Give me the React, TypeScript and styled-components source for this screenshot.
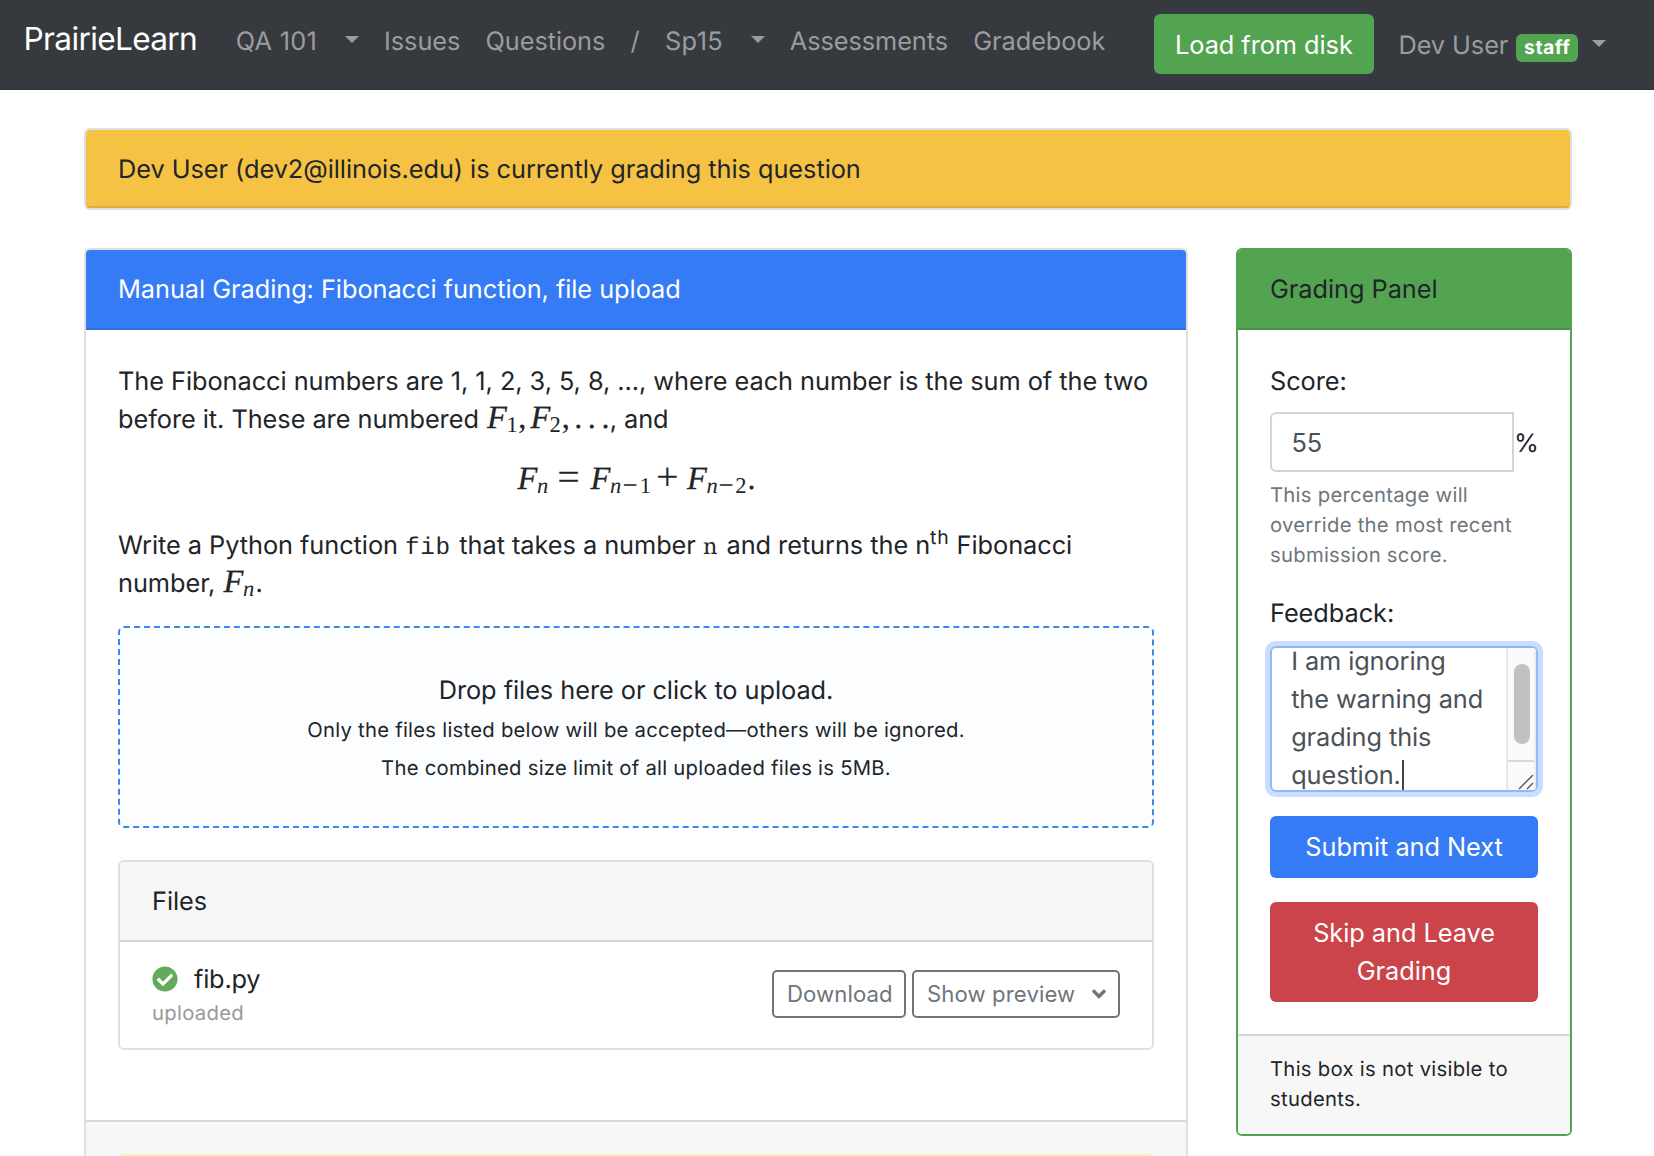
import React from 'react';
import styled, { createGlobalStyle, css } from 'styled-components';
import { FaAngleDown, FaCheckCircle } from 'react-icons/fa';

const color = {
  text: '#212529',
  muted: '#6e757c',
  primary: '#357bf6',
  success: '#53a451',
  danger: '#cb444a',
  warning: '#f5c243',
  dark: '#363a3f',
  border: '#dfdfdf',
  cap: '#f7f7f7',
};

const GlobalStyle = createGlobalStyle`
  *, *::before, *::after { box-sizing: border-box; }
  html, body { margin: 0; height: 1156px; overflow: hidden; }
  body {
    background: #fff;
    color: ${color.text};
    font-family: Inter, 'Liberation Sans', sans-serif;
    font-size: 25.33px;
    line-height: 38px;
    letter-spacing: -0.05px;
    text-rendering: geometricPrecision;
  }
  button, input { font: inherit; letter-spacing: inherit; margin: 0; }
`;

/* Navigation bar */
const Navbar = styled.nav`
  display: flex;
  align-items: center;
  height: 90px;
  padding-left: 23.5px;
  background: ${color.dark};
  border-bottom: 1px solid #2e3236;
`;

const NavLeft = styled.div`
  display: flex;
  align-items: baseline;
  gap: 25.3px;
  padding-bottom: 9px;
`;

const Brand = styled.a`
  width: 187px;
  color: #fff;
  font-size: 31.67px;
  letter-spacing: -0.67px;
  white-space: nowrap;
`;

const NavLink = styled.a<{ $tracking?: number }>`
  color: #9a9c9f;
  letter-spacing: ${(p) => p.$tracking ?? -0.08}px;
  white-space: nowrap;
`;

const UserLink = styled(NavLink)`
  padding-top: 3.5px;
`;

const Caret = styled.span<{ $gap: number }>`
  display: inline-block;
  margin-left: ${(p) => p.$gap}px;
  vertical-align: 6.5px;
  border: 7.4px solid transparent;
  border-top-color: #9a9c9f;
  border-bottom: 0;
`;

const NavRight = styled.div`
  display: flex;
  align-items: center;
  gap: 24.6px;
  margin-left: 48.6px;
  padding-bottom: 1px;
`;

const LoadButton = styled.button`
  width: 220px;
  height: 60px;
  padding: 1px 0 0;
  border: 0;
  border-radius: 6px;
  background: ${color.success};
  color: #fff;
`;

const Badge = styled.span`
  display: inline-block;
  width: 62px;
  height: 28px;
  margin-left: 8px;
  padding-bottom: 2px;
  border-radius: 6px;
  background: ${color.success};
  color: #fff;
  font-size: 19.4px;
  font-weight: 700;
  line-height: 26px;
  letter-spacing: 0.5px;
  text-align: center;
`;

/* Page frame */
const Page = styled.main`
  display: grid;
  grid-template-columns: 1104px 336px;
  column-gap: 48px;
  row-gap: 38px;
  align-items: start;
  padding: 38px 82px 0 84px;
`;

const Card = styled.section<{ $accent?: string }>`
  border: 2px solid ${(p) => p.$accent ?? color.border};
  border-radius: 6px;
  overflow: hidden;
  background: #fff;
`;

const AlertCard = styled(Card)`
  grid-column: 1 / -1;
`;

const CardHeader = styled.header<{ $bg?: string; $line?: string; $fg?: string; $short?: boolean }>`
  height: ${(p) => (p.$short ? 78 : 80)}px;
  padding: 20.7px 32px 0;
  background: ${(p) => p.$bg ?? color.cap};
  border-bottom: 2px solid ${(p) => p.$line ?? '#d8d8d8'};
  color: ${(p) => p.$fg ?? color.text};
`;

const QuestionBody = styled.div`
  height: 790px;
  padding: 33px 32px 0;
`;

const Paragraph = styled.p`
  height: 76px;
  margin: 0;
  white-space: nowrap;
`;

const Equation = styled.div`
  height: 38px;
  margin: 22.6px 0 27.4px;
  padding-left: 399.5px;
  white-space: nowrap;
`;

const Code = styled.code<{ $slab?: boolean }>`
  margin-right: 1.4px;
  font-family: ${(p) => (p.$slab ? "'DejaVu Serif', serif" : "'Liberation Mono', monospace")};
  font-size: ${(p) => (p.$slab ? 22.4 : 24.3)}px;
  line-height: 0;
  letter-spacing: 0.7px;
`;

const Sup = styled.sup`
  font-size: 19.4px;
  line-height: 0;
  letter-spacing: 0.8px;
  vertical-align: 10.3px;
`;

/* Mathematical symbols, each with its own advance width */
const symbol = css<{ $w: number }>`
  display: inline-block;
  width: ${(p) => p.$w}px;
  font-family: 'Liberation Serif', serif;
  line-height: 0;
  letter-spacing: 0;
  white-space: nowrap;
`;

const Var = styled.i<{ $w: number }>`
  ${symbol}
  font-size: 32.5px;
  -webkit-text-stroke: 0.3px currentColor;
`;

const Punct = styled.span<{ $w: number }>`
  ${symbol}
  font-size: 34px;
`;

const Relation = styled.span<{ $w: number }>`
  ${symbol}
  font-size: 40px;
  vertical-align: -1.5px;
`;

const Sub = styled.span<{ $w: number; $italic?: boolean }>`
  ${symbol}
  font-size: 22.5px;
  font-style: ${(p) => (p.$italic ? 'italic' : 'normal')};
  vertical-align: -4px;
`;

const SubMinus = styled(Sub)`
  font-size: 27px;
  vertical-align: -5px;
`;

const MathRun = styled.span`
  margin-left: 1px;
`;

const Dropzone = styled.div`
  display: flex;
  flex-direction: column;
  align-items: center;
  height: 202px;
  margin-top: 23px;
  padding-top: 44px;
  border: 2px dashed #3d87ec;
  border-radius: 6px;
  background: #fcfdff;
`;

const DropTitle = styled.span`
  margin-bottom: 1px;
`;

const DropHint = styled.small`
  font-size: 20.27px;
  letter-spacing: 0.255px;
`;

const FilesCard = styled(Card)`
  height: 190px;
  margin-top: 32px;
`;

const FileRow = styled.div`
  display: flex;
  justify-content: space-between;
  padding: 17.6px 32px 0;
`;

const FileName = styled.div`
  display: flex;
  align-items: center;
  gap: 16px;
  padding-top: 1px;
  letter-spacing: -0.2px;

  svg {
    margin-top: -2px;
    color: #64aa5b;
  }
`;

const FileStatus = styled.div`
  margin-top: -0.5px;
  color: #999;
  font-size: 20.27px;
  line-height: 30px;
  letter-spacing: 0.3px;
`;

const ButtonRow = styled.div`
  display: flex;
  gap: 6px;
  padding-top: 10.4px;
`;

const OutlineButton = styled.button<{ $w: number }>`
  display: flex;
  align-items: center;
  justify-content: space-between;
  width: ${(p) => p.$w}px;
  height: 48px;
  padding: 0 8px 0 13px;
  border: 2px solid ${color.muted};
  border-radius: 5px;
  background: #fff;
  color: ${color.muted};
  font-size: 22.17px;
  letter-spacing: 0.1px;
`;

const QuestionFooter = styled.footer`
  height: 80px;
  padding: 32px 32px 0;
  border-top: 2px solid #d8d8d8;
  background: ${color.cap};
`;

const Notice = styled.div`
  height: 46px;
  border: 2px solid #fdebba;
  border-radius: 6px;
  background: #fdf2d0;
`;

/* Grading panel */
const PanelBody = styled.div`
  height: 704px;
  padding: 33px 32px 0;
`;

const Label = styled.label`
  display: block;
  white-space: nowrap;
`;

const ScoreRow = styled.div`
  display: flex;
  align-items: center;
  margin-top: 11px;
`;

const ScoreInput = styled.input`
  width: 244px;
  height: 60px;
  padding: 1px 19.5px 0;
  border: 2px solid #cfd4d9;
  border-radius: 6px 0 0 6px;
  background: #fff;
  color: #4c5157;
  outline: none;
`;

const Percent = styled.span`
  padding-top: 3px;
`;

const HelpText = styled.small`
  display: block;
  margin: 8.4px 0 24.6px;
  color: ${color.muted};
  font-size: 20.27px;
  line-height: 30px;
  letter-spacing: 0.27px;
`;

const FeedbackBox = styled.div`
  display: flex;
  height: 146px;
  margin-top: 13px;
  border: 2px solid #8dbbfa;
  border-radius: 6px;
  box-shadow: 0 0 0 5px #cbddfd;
  overflow: hidden;
`;

const FeedbackText = styled.div`
  flex: 1;
  margin-top: -5px;
  padding-left: 19.2px;
  color: #4c5157;
  letter-spacing: -0.1px;
  white-space: nowrap;
`;

const TextCursor = styled.span`
  display: inline-block;
  width: 2px;
  height: 32px;
  margin-left: 1px;
  background: #3f444a;
  vertical-align: -8px;
`;

const Scrollbar = styled.div`
  display: flex;
  flex-direction: column;
  width: 30px;
  border-left: 2px solid #e8e8e8;
  border-right: 2px solid #ededed;
  background: #fafafa;
`;

const Track = styled.div`
  flex: 1;
  padding: 16px 4px 0 6px;
`;

const Thumb = styled.div`
  height: 80px;
  border-radius: 8px;
  background: #c1c1c1;
`;

const Corner = styled.div`
  display: flex;
  justify-content: flex-end;
  align-items: flex-end;
  height: 30px;
  border-top: 2px solid #d9d9d9;
`;

const BlockButton = styled.button<{ $bg: string; $h: number }>`
  display: block;
  width: 100%;
  height: ${(p) => p.$h}px;
  margin-top: 24px;
  padding: 0 30px;
  border: 0;
  border-radius: 6px;
  background: ${(p) => p.$bg};
  color: #fff;
`;

const PanelFooter = styled.footer`
  height: 100px;
  padding: 17.7px 32px 0;
  border-top: 2px solid #d8d8d8;
  background: ${color.cap};
  font-size: 20.27px;
  line-height: 30px;
  letter-spacing: 0.29px;
`;

export default function App() {
  return (
    <>
      <GlobalStyle />
      <Navbar>
        <NavLeft>
          <Brand>PrairieLearn</Brand>
          <NavLink $tracking={0.25}>
            QA 101
            <Caret $gap={27.8} />
          </NavLink>
          <NavLink>Issues</NavLink>
          <NavLink>Questions</NavLink>
          <NavLink>/</NavLink>
          <NavLink $tracking={0.4}>
            Sp15
            <Caret $gap={27.4} />
          </NavLink>
          <NavLink>Assessments</NavLink>
          <NavLink>Gradebook</NavLink>
        </NavLeft>
        <NavRight>
          <LoadButton>Load from disk</LoadButton>
          <UserLink>
            Dev User
            <Badge>staff</Badge>
            <Caret $gap={14} />
          </UserLink>
        </NavRight>
      </Navbar>

      <Page>
        <AlertCard>
          <CardHeader $bg={color.warning} $line="#dbad3d" $short>
            Dev User (dev2@illinois.edu) is currently grading this question
          </CardHeader>
        </AlertCard>

        <Card>
          <CardHeader $bg={color.primary} $line="#306ed9" $fg="#fff">
            Manual Grading: Fibonacci function, file upload
          </CardHeader>
          <QuestionBody>
            <Paragraph>
              The Fibonacci numbers are 1, 1, 2, 3, 5, 8, ..., where each number is the sum of the two
              <br />
              before it. These are numbered{' '}
              <MathRun>
                <Var $w={19.5}>F</Var>
                <Sub $w={11.5}>1</Sub>
                <Punct $w={12.5}>,</Punct>
                <Var $w={19}>F</Var>
                <Sub $w={12}>2</Sub>
                <Punct $w={12.5}>,</Punct>
                <Punct $w={13.6}>.</Punct>
                <Punct $w={13.6}>.</Punct>
                <Punct $w={8.5}>.</Punct>
              </MathRun>
              , and
            </Paragraph>
            <Equation>
              <Var $w={19.5}>F</Var>
              <Sub $italic $w={20.2}>n</Sub>
              <Relation $w={33.3}>=</Relation>
              <Var $w={19.5}>F</Var>
              <Sub $italic $w={12.5}>n</Sub>
              <SubMinus $w={17.2}>−</SubMinus>
              <Sub $w={16.3}>1</Sub>
              <Relation $w={31}>+</Relation>
              <Var $w={19.5}>F</Var>
              <Sub $italic $w={12}>n</Sub>
              <SubMinus $w={16.8}>−</SubMinus>
              <Sub $w={12}>2</Sub>
              <Punct $w={7}>.</Punct>
            </Equation>
            <Paragraph>
              Write a Python function <Code>fib</Code> that takes a number <Code $slab>n</Code> and returns the n
              <Sup>th</Sup> Fibonacci
              <br />
              number,{' '}
              <MathRun>
                <Var $w={19.5}>F</Var>
                <Sub $italic $w={12.5}>n</Sub>
              </MathRun>
              .
            </Paragraph>
            <Dropzone>
              <DropTitle>Drop files here or click to upload.</DropTitle>
              <DropHint>Only the files listed below will be accepted—others will be ignored.</DropHint>
              <DropHint>The combined size limit of all uploaded files is 5MB.</DropHint>
            </Dropzone>
            <FilesCard>
              <CardHeader>Files</CardHeader>
              <FileRow>
                <div>
                  <FileName>
                    <FaCheckCircle size={26} />
                    fib.py
                  </FileName>
                  <FileStatus>uploaded</FileStatus>
                </div>
                <ButtonRow>
                  <OutlineButton $w={134}>Download</OutlineButton>
                  <OutlineButton $w={208}>
                    Show preview
                    <FaAngleDown size={22} />
                  </OutlineButton>
                </ButtonRow>
              </FileRow>
            </FilesCard>
          </QuestionBody>
          <QuestionFooter>
            <Notice />
          </QuestionFooter>
        </Card>

        <Card $accent={color.success}>
          <CardHeader $bg={color.success} $line="#4a9148">
            Grading Panel
          </CardHeader>
          <PanelBody>
            <Label>Score:</Label>
            <ScoreRow>
              <ScoreInput defaultValue="55" />
              <Percent>%</Percent>
            </ScoreRow>
            <HelpText>
              This percentage will
              <br />
              override the most recent
              <br />
              submission score.
            </HelpText>
            <Label>Feedback:</Label>
            <FeedbackBox>
              <FeedbackText>
                I am ignoring
                <br />
                the warning and
                <br />
                grading this
                <br />
                question.
                <TextCursor />
              </FeedbackText>
              <Scrollbar>
                <Track>
                  <Thumb />
                </Track>
                <Corner>
                  <svg width="16" height="16" viewBox="0 0 16 16" stroke="#555" strokeWidth="1.4" fill="none">
                    <path d="M1 15 L15 1 M9 15 L15 9" />
                  </svg>
                </Corner>
              </Scrollbar>
            </FeedbackBox>
            <BlockButton $bg={color.primary} $h={62}>
              Submit and Next
            </BlockButton>
            <BlockButton $bg={color.danger} $h={100}>
              Skip and Leave Grading
            </BlockButton>
          </PanelBody>
          <PanelFooter>
            This box is not visible to
            <br />
            students.
          </PanelFooter>
        </Card>
      </Page>
    </>
  );
}
